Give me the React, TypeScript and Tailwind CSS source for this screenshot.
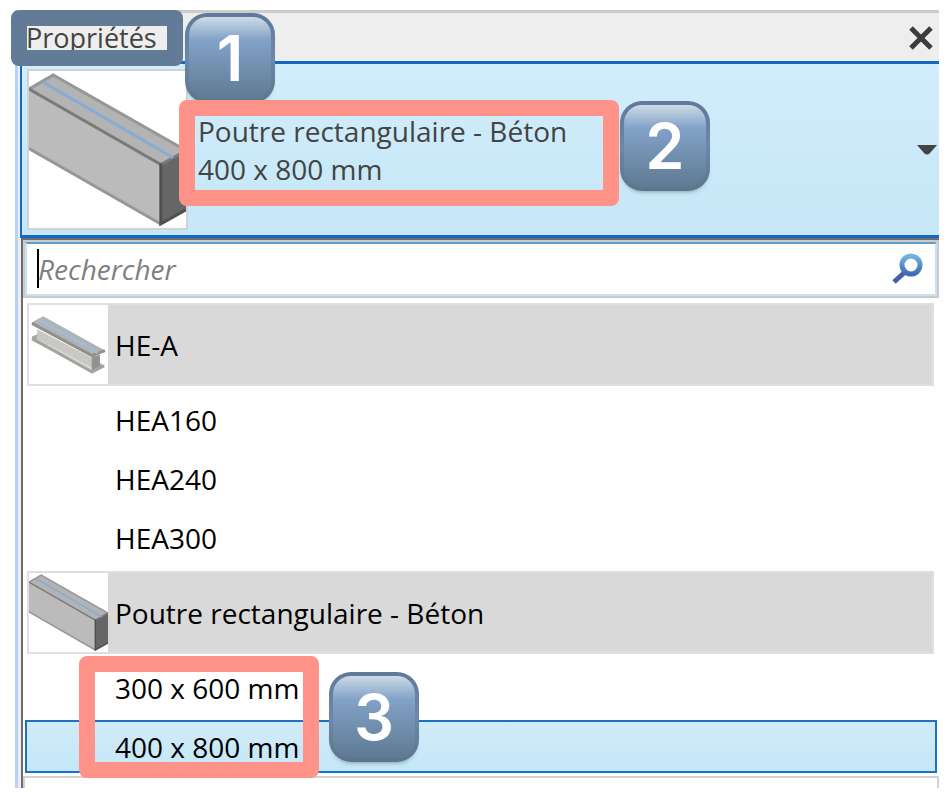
import { useId, useState } from "react";

const families = [
  { name: "HE-A", icon: "steel", types: ["HEA160", "HEA240", "HEA300"] },
  { name: "Poutre rectangulaire - Béton", icon: "concrete", types: ["300 x 600 mm", "400 x 800 mm"] },
];

function ConcreteBeam({ className }: { className: string }) {
  return (
    <svg viewBox="0 0 156 156" className={className} aria-hidden="true">
      <path d="M0 17 24 4 156 79 131 93Z" fill="#b3b3b3" />
      <path d="M0 18 131 93V151L0 77Z" fill="#bbbbbb" />
      <path d="M131 93 156 79V138L131 152Z" fill="#666666" />
      <path d="M0 77 131 152M0 18 24 4 156 79" fill="none" stroke="#979797" strokeWidth="3" />
      <path d="M0 18 131 93 156 79" fill="none" stroke="#7a7a7a" strokeWidth="3" />
      <path d="M131 92V152L156 138" fill="none" stroke="#505050" strokeWidth="3" />
      <path d="M14 11 143 86" stroke="#86acd6" strokeWidth="3" />
    </svg>
  );
}

function SteelBeam({ className }: { className: string }) {
  return (
    <svg viewBox="0 0 78 78" className={className} aria-hidden="true">
      <path d="M3 31 13 27 75 60 64 67 3 35Z" fill="#a9a9a5" />
      <path d="M8 24 62 52V63L8 33Z" fill="#c9c8c4" />
      <path d="M8 33 62 62V66L8 37Z" fill="#dddcd8" />
      <path d="M62 51 70 49V60L62 65Z" fill="#92928f" />
      <path d="M3 17 14 11 75 45 62 51 3 20Z" fill="#b0b2b4" />
      <path d="M3 18 62 50 75 45" fill="none" stroke="#90908e" strokeWidth="3" />
      <path d="M3 33 62 66 74 60" fill="none" stroke="#a3a3a0" strokeWidth="3" />
      <path d="M9 14 68 47" stroke="#a4bbd4" strokeWidth="3" />
    </svg>
  );
}

function Badge({ digit, className }: { digit: string; className: string }) {
  return (
    <div className={`absolute size-[90px] rounded-[22px] bg-linear-to-b from-[#5f7a98] via-[#6c88aa] to-[#5c758c] p-1 shadow-[0_4px_5px_-4px_rgba(50,70,90,0.6)] ${className}`}>
      <div className="flex size-full items-center justify-center rounded-[18px] bg-linear-to-b from-[#cddbe6] from-0% via-[#82a2c8] via-28% to-[#5f7a92] to-100% font-['Inter',sans-serif] text-[63px] leading-none font-semibold text-white">
        {digit}
      </div>
    </div>
  );
}

export default function App() {
  const [selected, setSelected] = useState("400 x 800 mm");
  const [query, setQuery] = useState("");
  const searchId = useId();

  return (
    <main className="relative bg-white pt-[10px] pr-[13px] pb-1 pl-[15px] font-['Open_Sans','Noto_Sans',sans-serif] text-[28px] text-black">
      <div className="border-l-[3px] border-[#b5d2f8] bg-[#eeeeee] pl-[2px]">
        <header className="flex h-[51px] items-center justify-between border-t-[3px] border-[#cccccc] pt-[2px] pr-1 pl-[6px] text-[#444444]">
          <h1 className="text-[27px] leading-[36px]">Propriétés</h1>
          <button type="button" aria-label="Fermer" className="p-[2px]">
            <svg viewBox="0 0 24 24" className="size-6" aria-hidden="true">
              <path d="M2 2 22 22M22 2 2 22" stroke="#3c3c3c" strokeWidth="5" />
            </svg>
          </button>
        </header>

        <button
          type="button"
          aria-expanded="true"
          className="flex h-[177px] w-full items-center border-y-[3px] border-l-2 border-[#1467c2] bg-linear-to-b from-[#d2edfb] to-[#c5e7f7] pr-[2px] pl-[5px] text-left text-[#444444]"
        >
          <span className="size-[161px] shrink-0 border-2 border-[#cfd3d6] bg-white">
            <ConcreteBeam className="size-full" />
          </span>
          <span className="ml-[10px] grow text-[28px] leading-[38px]">
            Poutre rectangulaire - Béton
            <br />
            {selected}
          </span>
          <svg viewBox="0 0 20 10" className="h-[10px] w-5" aria-hidden="true">
            <path d="M0 0H20L13 8Q10 11 7 8Z" fill="#444444" />
          </svg>
        </button>

        <section className="ml-px border-t-2 border-l-2 border-[#6d6d6d] bg-white">
          <div className="border-2 border-[#cbcbcb]">
            <div className="relative flex h-[54px] items-center border-2 border-[#c4e2f2] border-t-[#5f9fce] bg-white pr-[11px] pl-[11px]">
              <span className="absolute top-[5px] left-[10px] h-[39px] w-[2px] bg-black" />
              <input
                id={searchId}
                value={query}
                onChange={(e) => setQuery(e.target.value)}
                placeholder="Rechercher"
                className="min-w-0 grow bg-transparent leading-[38px] outline-none placeholder:text-[#808080] placeholder:italic"
              />
              <label htmlFor={searchId} aria-label="Rechercher" className="shrink-0">
                <svg viewBox="0 0 32 32" className="size-8" aria-hidden="true">
                  <defs>
                    <linearGradient id="lens" x1="0" y1="0" x2="0" y2="1">
                      <stop offset="0" stopColor="#70b5dc" />
                      <stop offset="1" stopColor="#416bb5" />
                    </linearGradient>
                  </defs>
                  <path d="M2 29 13 19" stroke="#4460a8" strokeWidth="5" />
                  <circle cx="19" cy="12" r="9" fill="none" stroke="url(#lens)" strokeWidth="5" />
                </svg>
              </label>
            </div>
          </div>

          <div className="pt-[5px]">
            {families.map((family) => (
              <div key={family.name}>
                <h2 className="mr-[5px] ml-1 flex h-[83px] items-center border-2 border-[#dfdfdf] bg-[#d9d9d9]">
                  <span className="size-[79px] shrink-0 bg-white">
                    {family.icon === "steel" ? <SteelBeam className="size-full" /> : <ConcreteBeam className="size-full" />}
                  </span>
                  <span className="ml-[7px]">{family.name}</span>
                </h2>
                <ul className="mr-[2px] ml-[2px] flex flex-col gap-[6px] py-[7px]">
                  {family.types.map((type) => (
                    <li key={type}>
                      <button
                        type="button"
                        onClick={() => setSelected(type)}
                        className={`flex h-[53px] w-full items-center border-2 pl-[88px] text-left ${
                          type === selected
                            ? "border-[#1b70c8] bg-linear-to-b from-[#d1ebf8] to-[#c4e7f7]"
                            : "border-transparent"
                        }`}
                      >
                        {type}
                      </button>
                    </li>
                  ))}
                </ul>
              </div>
            ))}
          </div>
          <div className="-mt-[4px] h-3 border-x-2 border-t-2 border-[#d2d2d2]" />
        </section>
      </div>

      <div className="pointer-events-none absolute top-[10px] left-[11px] h-14 w-[172px] rounded-lg border-16 border-[#627c97]" />
      <Badge digit="1" className="top-[13px] left-[185px]" />
      <div className="pointer-events-none absolute top-[100px] left-[179px] h-[106px] w-[440px] rounded-lg border-16 border-[#ff9289]" />
      <Badge digit="2" className="top-[101px] left-[620px]" />
      <div className="pointer-events-none absolute top-[656px] left-[79px] h-[122px] w-[240px] rounded-lg border-16 border-[#ff9289]" />
      <Badge digit="3" className="top-[672px] left-[329px]" />
    </main>
  );
}
